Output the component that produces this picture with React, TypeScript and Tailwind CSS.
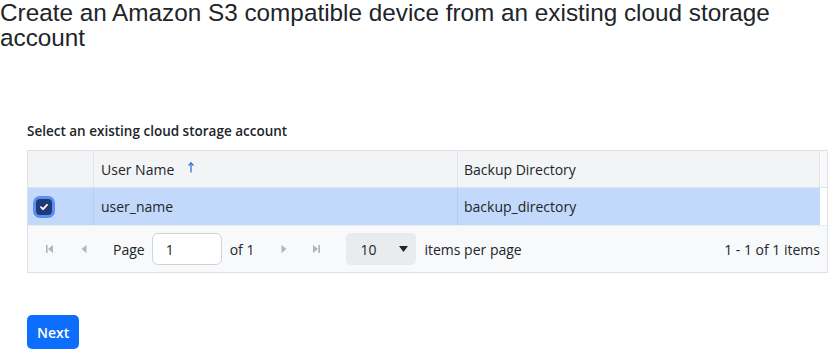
import React from "react";

const ui = { fontFamily: '"Open Sans", "Noto Sans", sans-serif' };

function FirstIcon() {
  return (
    <svg width="8" height="8" viewBox="0 0 8 8" fill="#adb5bd">
      <rect x="0" y="0" width="1.6" height="8" />
      <polygon points="7,0 7,8 2,4" />
    </svg>
  );
}
function PrevIcon() {
  return (
    <svg width="6" height="8" viewBox="0 0 6 8" fill="#adb5bd">
      <polygon points="5.5,0 5.5,8 0.5,4" />
    </svg>
  );
}
function NextIcon() {
  return (
    <svg width="6" height="8" viewBox="0 0 6 8" fill="#adb5bd">
      <polygon points="0.5,0 0.5,8 5.5,4" />
    </svg>
  );
}
function LastIcon() {
  return (
    <svg width="8" height="8" viewBox="0 0 8 8" fill="#adb5bd">
      <polygon points="1,0 1,8 6,4" />
      <rect x="6.4" y="0" width="1.6" height="8" />
    </svg>
  );
}

export default function App() {
  return (
    <div className="w-[828px] h-[349px] bg-white overflow-hidden relative">
      <h1
        className="text-[24.3px] leading-[25px] text-[#212529]"
        style={{ fontFamily: '"Liberation Sans", Arial, sans-serif' }}
      >
        Create an Amazon S3 compatible device from an existing cloud storage account
      </h1>

      <div className="pl-[27px] pt-[72px]" style={ui}>
        <div className="text-[13.5px] font-semibold text-[#212529] leading-[18px] mb-[10px]">
          Select an existing cloud storage account
        </div>

        <div className="w-[801px] border border-[#dee2e6] text-[14px] text-[#212529]">
          <div className="flex h-[37px] bg-[#f3f4f6] border-b border-[#dee2e6]">
            <div className="w-[66px] border-r border-[#e2e5e9]" />
            <div className="w-[364px] border-r border-[#e2e5e9] flex items-center pl-[7px]">
              <span>User Name</span>
              <svg className="ml-[14px] mb-[4px]" width="6" height="11" viewBox="0 0 6 11">
                <path d="M3 1 V10.5" stroke="#2f6fde" strokeWidth="1.3" />
                <path d="M0.5 3.6 L3 0.8 L5.5 3.6" stroke="#2f6fde" strokeWidth="1.3" fill="none" />
              </svg>
            </div>
            <div className="w-[362px] border-r border-[#e2e5e9] flex items-center pl-[6px]">
              Backup Directory
            </div>
            <div className="flex-1 bg-[#f8f9fa]" />
          </div>

          <div className="flex h-[38px] border-b border-[#e9ecef]">
            <div className="w-[66px] bg-[#c3d9fb] border-r border-[#b7cdf0] flex items-center pl-[8px]">
              <div className="w-[16px] h-[16px] rounded-[4px] bg-[#1e3a78] ring-[3px] ring-[#5b8ef0] flex items-center justify-center">
                <svg width="10" height="10" viewBox="0 0 10 10">
                  <path d="M2 5.2 L4.1 7.2 L8 2.8" stroke="#fff" strokeWidth="1.8" fill="none" strokeLinecap="round" strokeLinejoin="round" />
                </svg>
              </div>
            </div>
            <div className="w-[364px] bg-[#c3d9fb] border-r border-[#b7cdf0] flex items-center pl-[7px]">
              user_name
            </div>
            <div className="w-[362px] bg-[#c3d9fb] flex items-center pl-[6px]">backup_directory</div>
            <div className="flex-1 bg-white" />
          </div>

          <div className="flex items-center h-[46px] bg-[#f8f9fa] pl-[18px] pr-[7px]">
            <FirstIcon />
            <span className="ml-[27px]"><PrevIcon /></span>
            <span className="ml-[26px]">Page</span>
            <div className="ml-[7px] w-[70px] h-[32px] rounded-[6px] border border-[#ced4da] bg-white flex items-center pl-[13px]">
              1
            </div>
            <span className="ml-[8px]">of 1</span>
            <span className="ml-[27px]"><NextIcon /></span>
            <span className="ml-[25px]"><LastIcon /></span>
            <div className="ml-[26px] w-[70px] h-[32px] rounded-[5px] bg-[#e9ecef] flex items-center pl-[14px] pr-[8px] justify-between">
              <span>10</span>
              <svg width="9" height="6" viewBox="0 0 9 6" fill="#212529">
                <polygon points="0,0 9,0 4.5,6" />
              </svg>
            </div>
            <span className="ml-[8px]">items per page</span>
            <span className="ml-auto">1 - 1 of 1 items</span>
          </div>
        </div>

        <button className="mt-[42px] h-[34px] px-[10px] rounded-[5px] bg-[#0d6efd] text-white text-[14px] font-semibold">
          Next
        </button>
      </div>
    </div>
  );
}
